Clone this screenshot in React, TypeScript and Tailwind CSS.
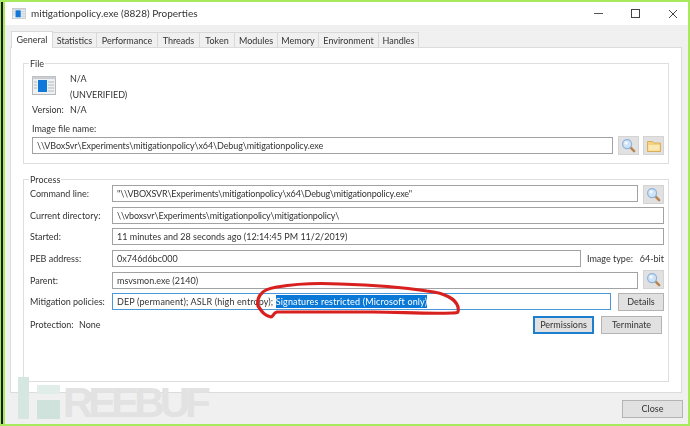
import type { ReactNode } from "react";

const FONT = "font-['Lato','Roboto',sans-serif]";

const tabs = [
  { name: "Statistics", width: "w-[44px]" },
  { name: "Performance", width: "w-[61px]" },
  { name: "Threads", width: "w-[42px]" },
  { name: "Token", width: "w-[35px]" },
  { name: "Modules", width: "w-[43px]" },
  { name: "Memory", width: "w-[41px]" },
  { name: "Environment", width: "w-[60px]" },
  { name: "Handles", width: "w-[40px]" },
];

function SearchIcon() {
  return (
    <svg width="15" height="15" viewBox="0 0 16 16">
      <line x1="9.5" y1="9.5" x2="14" y2="14" stroke="#b9844f" strokeWidth="2.6" strokeLinecap="round" />
      <circle cx="6.5" cy="6.5" r="4.8" fill="#cfe3f7" stroke="#8fb4dc" strokeWidth="1.3" />
      <circle cx="5.4" cy="5.2" r="1.8" fill="#f2f8fe" />
    </svg>
  );
}

function FolderIcon() {
  return (
    <svg width="16" height="16" viewBox="0 0 16 16">
      <path d="M1.5 3.5h5l1.5 1.5h6.500v8.500h-13z" fill="#f4d27e" stroke="#dcae58" strokeWidth="1" />
      <rect x="2.500" y="7" width="11" height="5.500" fill="#fbe9b4" />
    </svg>
  );
}

function AppIcon({ small }: { small?: boolean }) {
  return (
    <svg width={small ? 14 : 24} height={small ? 11 : 19} viewBox="0 0 24 19">
      <rect x="0.500" y="0.500" width="23" height="18" fill="#eef0f2" stroke="#b4b8bc" />
      <rect x="0.500" y="0.500" width="23" height="2.500" fill="#c9cdd1" />
      <rect x="6" y="4" width="9" height="12" fill="#0f78d8" />
      <path d="M2 6h3M2 9h3M2 12h3M16 6h6M16 9h6M16 12h6M16 15h6" stroke="#b6babd" strokeWidth="1" />
    </svg>
  );
}

function Field({ width, children, active, tracking = "" }: { width: string; children?: ReactNode; active?: boolean; tracking?: string }) {
  return (
    <div
      className={`h-[17px] ${width} ${tracking} flex items-center border whitespace-pre overflow-hidden bg-white pl-[4px] text-[9px] text-[#333] ${
        active ? "border-[#4a97dc]" : "border-[#a2a2a2]"
      }`}
    >
      {children}
    </div>
  );
}

function IconButton({ children }: { children: ReactNode }) {
  return (
    <div className="w-[21px] h-[19px] flex items-center justify-center bg-[#e1e1e1] border border-[#d4d4d4]">
      {children}
    </div>
  );
}

function TextButton({ label, width, focused }: { label: string; width: string; focused?: boolean }) {
  return (
    <div
      className={`h-[18px] ${width} flex items-center justify-center bg-[#e1e1e1] text-[9px] text-[#333] border ${
        focused ? "border-[#1c7fd0] border-2" : "border-[#b4b4b4]"
      }`}
    >
      {label}
    </div>
  );
}

function Label({ children, width = "w-[82px]" }: { children: ReactNode; width?: string }) {
  return <div className={`${width} shrink-0 pt-[2px] text-[9px] text-[#333] whitespace-nowrap`}>{children}</div>;
}

function Row({ height, children }: { height: string; children: ReactNode }) {
  return <div className={`${height} flex items-start`}>{children}</div>;
}

function Legend({ children }: { children: ReactNode }) {
  return (
    <div className="absolute top-[-7px] left-[5px] bg-white px-[1px] text-[9px] leading-[14px] text-[#333]">
      {children}
    </div>
  );
}

export default function App() {
  return (
    <div className={`relative w-[690px] h-[426px] overflow-hidden bg-[#a8ea5e] pt-[2px] pb-[2px] pr-[2px] pl-[5px] ${FONT}`}>
      {/* dark edge of the window behind */}
      <div className="absolute left-[1px] top-[2px] bottom-[2px] w-[2px] bg-[#1c1c1c]" />

      <div className="h-full flex flex-col bg-[#f0f0f0] blur-[0.3px]">
        <div className="h-[23px] shrink-0 bg-white flex items-center pl-[7px] pr-[10px]">
          <AppIcon small />
          <span className="ml-[5px] text-[10px] text-[#333] whitespace-nowrap">mitigationpolicy.exe (8828) Properties</span>
          <div className="ml-auto flex items-center gap-[28px]">
            <div className="w-[9px] h-[1px] bg-[#555]" />
            <div className="w-[9px] h-[9px] border border-[#444]" />
            <svg width="10" height="10" viewBox="0 0 10 10">
              <path d="M1 1l8 8M9 1l-8 8" stroke="#444" strokeWidth="1" />
            </svg>
          </div>
        </div>

        <div className="flex pl-[6px] pt-[7px] h-[22px] shrink-0 items-end">
          <div className="relative z-10 w-[42px] h-[17px] mb-[-1px] bg-white border border-b-0 border-[#d9d9d9] flex items-center justify-center text-[9px] text-[#333]">
            General
          </div>
          {tabs.map((tab) => (
            <div
              key={tab.name}
              className={`${tab.width} h-[15px] pt-[1px] bg-[#f0f0f0] border border-l-0 border-b-0 border-[#d9d9d9] flex items-center justify-center text-[9px] text-[#333] whitespace-nowrap`}
            >
              {tab.name}
            </div>
          ))}
        </div>

        <div className="ml-[5px] w-[672px] h-[346px] shrink-0 bg-white border border-[#dcdcdc] px-[12px] pt-[15px]">
          <div className="relative h-[101px] border border-[#dedede] pl-[8px]">
            <Legend>File</Legend>
            <div className="flex pt-[12px] h-[39px]">
              <AppIcon />
              <div className="ml-[14px] mt-[-5px] text-[9px] text-[#333] leading-[16px]">
                <div>N/A</div>
                <div>(UNVERIFIED)</div>
              </div>
            </div>
            <div className="flex text-[9px] text-[#333] h-[18px]">
              <div className="w-[38px]">Version:</div>
              <div>N/A</div>
            </div>
            <div className="text-[9px] text-[#333] h-[9px] leading-[14px] mt-[1px]">Image file name:</div>
            <div className="flex items-center mt-[5px]">
              <Field width="w-[581px]" tracking="tracking-[-0.1px]">\\VBoxSvr\Experiments\mitigationpolicy\x64\Debug\mitigationpolicy.exe</Field>
              <div className="ml-[5px] flex gap-[4px]">
                <IconButton>
                  <SearchIcon />
                </IconButton>
                <IconButton>
                  <FolderIcon />
                </IconButton>
              </div>
            </div>
          </div>

          <div className="relative mt-[15px] h-[203px] border border-[#dedede] pl-[6px] pt-[5px]">
            <Legend>Process</Legend>
            <Row height="h-[22px]">
              <Label>Command line:</Label>
              <Field width="w-[526px]" tracking="tracking-[-0.17px]">"\\VBOXSVR\Experiments\mitigationpolicy\x64\Debug\mitigationpolicy.exe"</Field>
              <div className="ml-[5px]">
                <IconButton>
                  <SearchIcon />
                </IconButton>
              </div>
            </Row>
            <Row height="h-[21px]">
              <Label>Current directory:</Label>
              <Field width="w-[552px]" tracking="tracking-[-0.13px]">\\vboxsvr\Experiments\mitigationpolicy\mitigationpolicy\</Field>
            </Row>
            <Row height="h-[22px]">
              <Label>Started:</Label>
              <Field width="w-[552px]">11 minutes and 28 seconds ago (12:14:45 PM 11/2/2019)</Field>
            </Row>
            <Row height="h-[22px]">
              <Label>PEB address:</Label>
              <Field width="w-[469px]">0x746d6bc000</Field>
              <div className="ml-[6px] pt-[2px] w-[77px] flex justify-between text-[9px] text-[#333] whitespace-nowrap">
                <span>Image type:</span>
                <span>64-bit</span>
              </div>
            </Row>
            <Row height="h-[21px]">
              <Label>Parent:</Label>
              <Field width="w-[526px]">msvsmon.exe (2140)</Field>
              <div className="ml-[5px] mt-[-2px]">
                <IconButton>
                  <SearchIcon />
                </IconButton>
              </div>
            </Row>
            <Row height="h-[23px]">
              <Label>Mitigation policies:</Label>
              <Field width="w-[499px]" active tracking="tracking-[0.12px]">
                {"DEP (permanent); ASLR (high entropy); "}
                <span className="bg-[#0a78d7] text-white tracking-[0.16px]">Signatures restricted (Microsoft only)</span>
              </Field>
              <div className="ml-[7px]">
                <TextButton label="Details" width="w-[46px]" />
              </div>
            </Row>
            <Row height="h-[20px]">
              <div className="flex text-[9px] text-[#333] pt-[2px] whitespace-nowrap">
                <span className="w-[49px]">Protection:</span>
                <span>None</span>
              </div>
              <div className="ml-auto mr-[6px] flex gap-[7px]">
                <TextButton label="Permissions" width="w-[61px]" focused />
                <TextButton label="Terminate" width="w-[61px]" />
              </div>
            </Row>
          </div>
        </div>

        <div className="flex justify-end pr-[5px] pt-[7px]">
          <TextButton label="Close" width="w-[61px]" />
        </div>
      </div>

      {/* FreeBuf watermark laid over the corner */}
      <div className="absolute left-[18px] top-[377px] flex items-end pointer-events-none">
        <div className="w-[11px] h-[42px] bg-[#d5e7e0]" />
        <div className="ml-[8px] w-[23px] h-[34px] flex flex-col justify-between">
          <div className="h-[9px] bg-[#e0ede8]" />
          <div className="h-[19px] bg-[#d0e2dc]" />
        </div>
        <div className="ml-[3px] mb-[-4px] text-[42px] leading-[41px] font-bold tracking-[-5px] text-[#e2e2e2] font-['Liberation_Sans',sans-serif]">
          REEBUF
        </div>
      </div>

      {/* red marker scribble around the signature policy */}
      <svg className="absolute left-0 top-0 pointer-events-none" width="690" height="426" viewBox="0 0 690 426">
        <path
          d="M262 293C265 289 272 288 277 287C300 283 320 283 340 284C370 285 400 287 427 291C445 293 456 299 458 307C459 313 458 313 452 313C425 314 400 312 373 312C340 312 310 312 277 312C273 313 273 317 271 317C265 316 262 312 258 306C257 302 258 296 262 293"
          fill="none"
          stroke="#d8201f"
          strokeWidth="3.2"
          strokeLinecap="round"
          strokeLinejoin="round"
        />
      </svg>
    </div>
  );
}
